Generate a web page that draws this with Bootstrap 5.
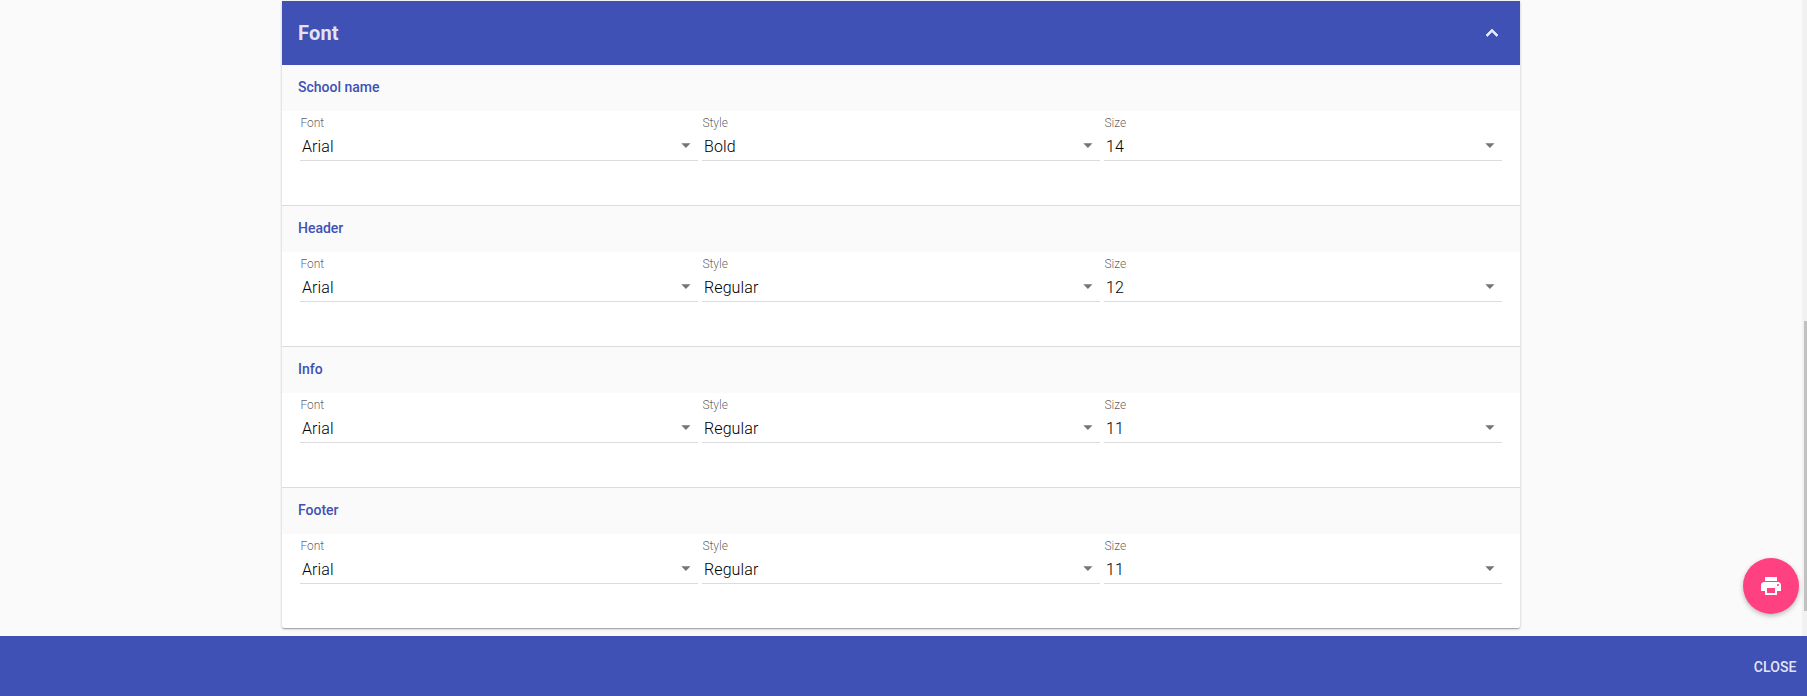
<!DOCTYPE html>
<html lang="en">
<head>
<meta charset="utf-8">
<meta name="viewport" content="width=device-width, initial-scale=1">
<title>Font settings</title>
<link href="https://cdn.jsdelivr.net/npm/bootstrap@5.3.0/dist/css/bootstrap.min.css" rel="stylesheet">
<style>
  body { font-family: Roboto, "Liberation Sans", sans-serif; background: #fafafa; color: rgba(0,0,0,.87); }
  .indigo { background: #3f51b5; color: rgba(255,255,255,.87); }
  .panel { width: 1238px; height: 627px; margin: 1px 0 0 282px; background: #fff; border-radius: 0 0 2px 2px;
    box-shadow: 0 1px 3px rgba(0,0,0,.2), 0 1px 1px rgba(0,0,0,.14), 0 2px 1px -1px rgba(0,0,0,.12); }
  .panel-head { height: 64px; padding: 0 16px; }
  .panel-head h2 { font-size: 20px; font-weight: 700; line-height: 24px; letter-spacing: .2px; }
  .group { height: 141px; border-bottom: 1px solid #dcdcdc; }
  .group:last-child { height: 140px; border-bottom: 0; }
  .group h3 { height: 46px; padding: 0 16px 1px; font-size: 14px; font-weight: 500; color: #3f51b5; background: #fafafa; }
  .fields { gap: 4px; padding: 0 18px; }
  .field { flex: 1 1 0; height: 50px; border-bottom: 1px solid #dcdcdc; }
  .field label { font-size: 12px; line-height: 14px; font-weight: 300; color: rgba(0,0,0,.66); padding: 5px 0 0 .4px; }
  .value { font-size: 16px; line-height: 20px; font-weight: 300; letter-spacing: .1px; color: #000; padding: 7px 5px 0 2px; }
  .footbar { height: 60px; padding: 2px 10.5px 0 0; }
  .footbar button { font-size: 14px; font-weight: 500; line-height: 20px; letter-spacing: .1px; color: inherit; }
  .fab { position: fixed; right: 8px; bottom: 82px; width: 56px; height: 56px; background: #ff4081; color: #fff;
    box-shadow: 0 2px 5px rgba(0,0,0,.26); }
  .scroll-track { width: 5px; padding: 321px 0 25px 2px; background: #f1f1f1; }
  .scroll-thumb { background: #c1c1c1; }
</style>
</head>
<body class="vh-100 overflow-hidden d-flex flex-column">
<main class="d-flex flex-grow-1 justify-content-between overflow-hidden">
  <section class="panel flex-shrink-0">
    <header class="panel-head indigo d-flex align-items-center justify-content-between">
      <h2 class="m-0">Font</h2>
      <svg width="24" height="24" viewBox="0 0 24 24" fill="currentColor"><path d="M12 8l-6 6 1.41 1.41L12 10.83l4.59 4.58L18 14z" stroke="currentColor" stroke-width=".7"/></svg>
    </header>
    <div id="groups"></div>
  </section>
  <div class="scroll-track d-flex"><div class="scroll-thumb w-100"></div></div>
</main>
<footer class="footbar indigo d-flex align-items-center justify-content-end flex-shrink-0">
  <button class="btn p-0 border-0">CLOSE</button>
</footer>
<button class="fab btn p-0 border-0 rounded-circle d-flex align-items-center justify-content-center" aria-label="Print">
  <svg width="24" height="24" viewBox="0 0 24 24" fill="currentColor"><path d="M19 8H5c-1.66 0-3 1.34-3 3v6h4v4h12v-4h4v-6c0-1.66-1.34-3-3-3zm-3 11H8v-5h8v5zm3-7c-.55 0-1-.45-1-1s.45-1 1-1 1 .45 1 1-.45 1-1 1zm-1-9H6v4h12V3z"/></svg>
</button>
<script>
  const groups = [
    ["School name", "Arial", "Bold", "14"],
    ["Header", "Arial", "Regular", "12"],
    ["Info", "Arial", "Regular", "11"],
    ["Footer", "Arial", "Regular", "11"]
  ];
  const names = ["Font", "Style", "Size"];
  const caret = '<svg width="14" height="20" viewBox="0 0 14 20"><path d="M2.3 6.2h9.2L6.9 11z" fill="#757575"/></svg>';
  document.getElementById("groups").innerHTML = groups.map(([title, ...values]) => `
    <div class="group">
      <h3 class="m-0 d-flex align-items-center">${title}</h3>
      <div class="fields d-flex">${values.map((v, i) => `
        <div class="field">
          <label class="d-block">${names[i]}</label>
          <div class="value d-flex justify-content-between"><span>${v}</span>${caret}</div>
        </div>`).join("")}</div>
    </div>`).join("");
</script>
<script src="https://cdn.jsdelivr.net/npm/bootstrap@5.3.0/dist/js/bootstrap.bundle.min.js"></script>
</body>
</html>
